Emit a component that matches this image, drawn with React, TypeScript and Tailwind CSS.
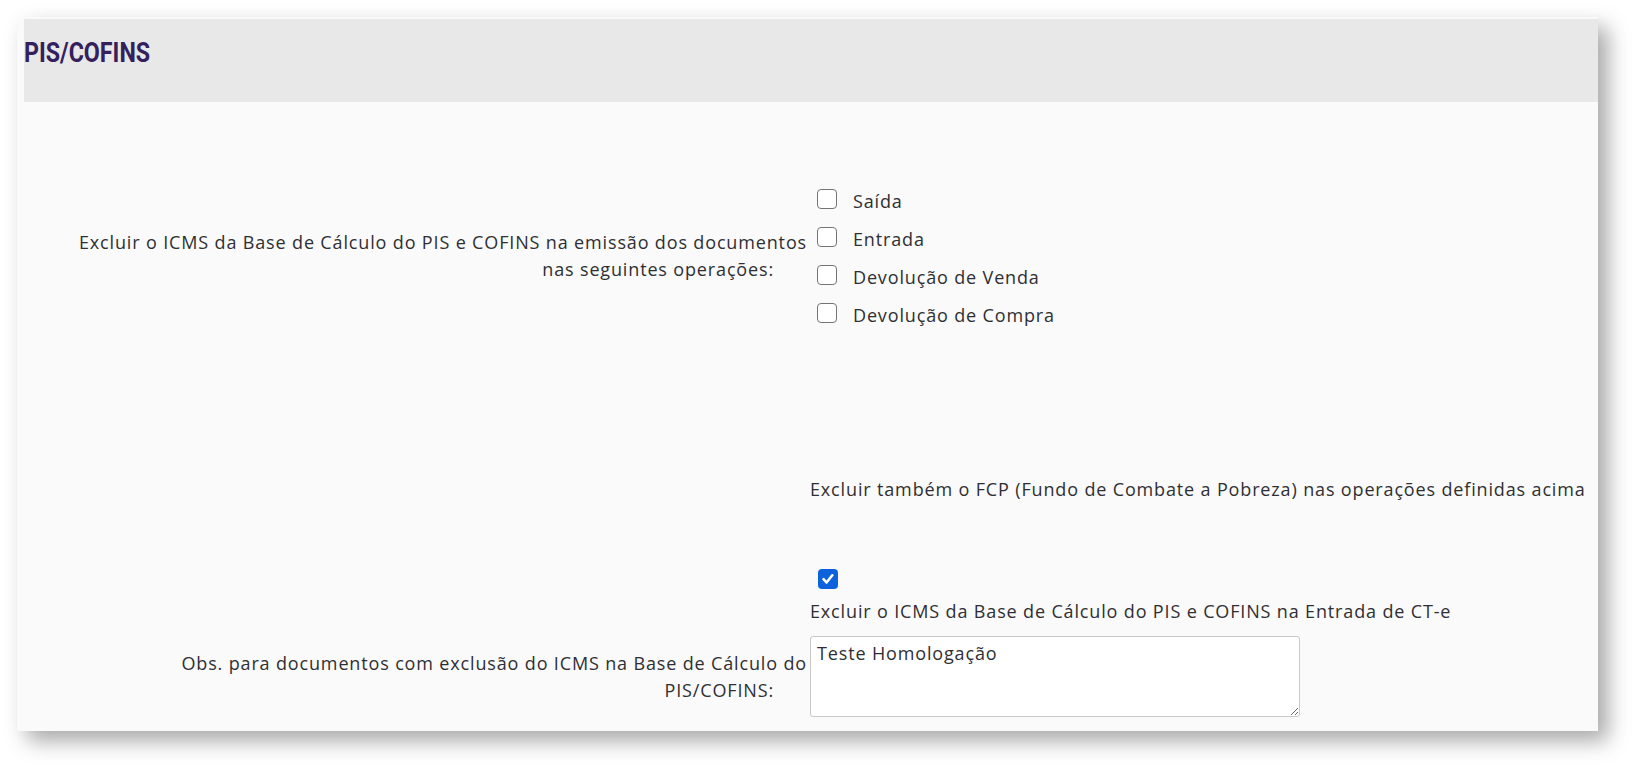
const body = { fontFamily: '"Open Sans", "Liberation Sans", sans-serif' };
const title = { fontFamily: 'Roboto, "Liberation Sans", sans-serif' };

function Box({ checked = false }: { checked?: boolean }) {
  if (checked) {
    return (
      <span className="flex h-[20px] w-[20px] shrink-0 items-center justify-center rounded-[4px] bg-[#0b62dc]">
        <svg viewBox="0 0 16 16" className="h-[16px] w-[16px]" fill="none">
          <path d="M3.5 8.2l3 3.3 5.8-7.2" stroke="#fff" strokeWidth="2.6" strokeLinecap="round" strokeLinejoin="round" />
        </svg>
      </span>
    );
  }
  return <span className="block h-[20px] w-[20px] shrink-0 rounded-[4px] border-[1.5px] border-[#747474] bg-white" />;
}

const options = ["Saída", "Entrada", "Devolução de Venda", "Devolução de Compra"];

export default function App() {
  return (
    <div className="min-h-screen bg-white pl-[17px] pt-[17px]" style={body}>
      <div className="w-[1581px] bg-[#fafafa] pl-[7px] pt-[2px] pb-[14px] shadow-[10px_10px_20px_rgba(0,0,0,0.34)]">
        <div className="h-[83px] bg-[#e8e8e8] pt-[18px]">
          <h1
            className="origin-left scale-x-[0.86] text-[27px] font-bold leading-[32px] text-[#33205c]"
            style={title}
          >
            PIS/COFINS
          </h1>
        </div>

        <div className="grid grid-cols-[783px_1fr] text-[18px] leading-[27px] tracking-[0.85px] text-[#2f2f33]">
          {/* row 1 */}
          <div className="mt-[78px] self-center text-right">
            <span className="block">Excluir o ICMS da Base de Cálculo do PIS e COFINS na emissão dos documentos</span>
            <span className="block pr-[33px]">nas seguintes operações:</span>
          </div>
          <div className="mt-[78px] pl-[10px]">
            {options.map((o) => (
              <label key={o} className="flex h-[38px] items-center gap-[16px]">
                <Box />
                <span className="pt-[4px]">{o}</span>
              </label>
            ))}
          </div>

          {/* row 2 */}
          <div />
          <div className="flex flex-col pl-[3px]">
            <p className="mt-[144px]">Excluir também o FCP (Fundo de Combate a Pobreza) nas operações definidas acima</p>
            <div className="mt-[66px] pl-[8px]">
              <Box checked />
            </div>
            <p className="mt-[9px]">Excluir o ICMS da Base de Cálculo do PIS e COFINS na Entrada de CT-e</p>
          </div>

          {/* row 3 */}
          <div className="mt-[11px] self-center text-right">
            <span className="block">Obs. para documentos com exclusão do ICMS na Base de Cálculo do</span>
            <span className="block pr-[33px]">PIS/COFINS:</span>
          </div>
          <div className="mt-[11px] pl-[3px]">
            <textarea
              defaultValue="Teste Homologação"
              className="block h-[81px] w-[490px] rounded-[3px] border border-[#c8c8c8] bg-white px-[6px] pt-[3px] text-[18px] leading-[27px] tracking-[0.85px] text-[#2f2f33] outline-none"
              style={body}
            />
          </div>
        </div>
      </div>
    </div>
  );
}
